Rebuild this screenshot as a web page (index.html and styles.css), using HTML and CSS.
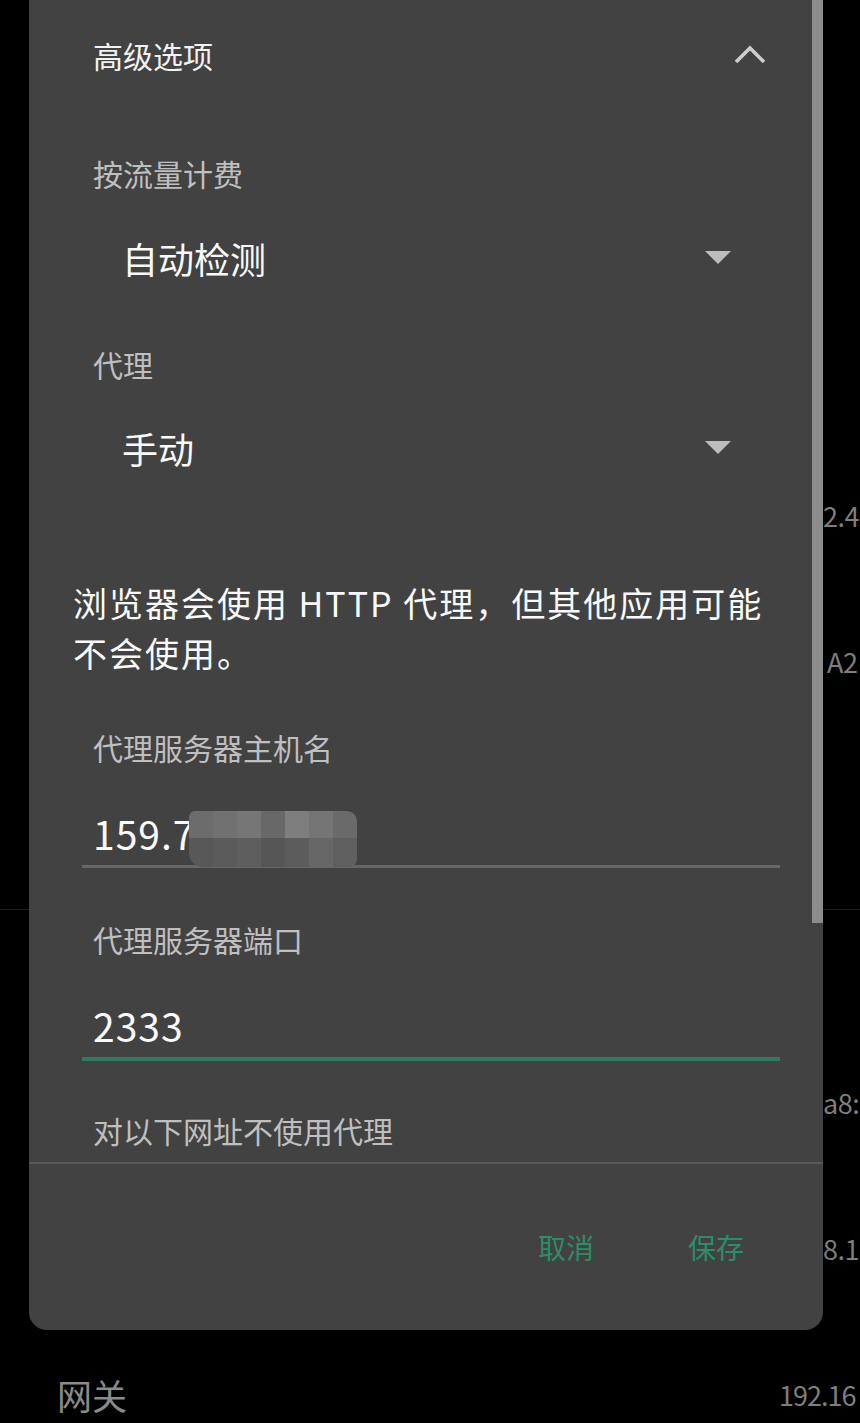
FILE: index.html
```html
<!DOCTYPE html>
<html lang="zh-CN">
<head>
<meta charset="utf-8">
<title>高级选项</title>
<link rel="stylesheet" href="styles.css">
</head>
<body>
<div class="page">
  <div class="bg-list">
    <div class="bg-row"><span class="bg-val edge">2.4</span></div>
    <div class="bg-row"><span class="bg-val edge a2">A2</span></div>
    <div class="bg-row"></div>
    <div class="bg-divider"></div>
    <div class="bg-row first"><span class="bg-val edge">a8:</span></div>
    <div class="bg-row"><span class="bg-val edge">8.1</span></div>
    <div class="bg-row"><span class="bg-label">网关</span><span class="bg-val gw">192.16</span></div>
  </div>

  <div class="dialog">
    <div class="scroll">
      <div class="head">
        <span class="title">高级选项</span>
        <svg class="chev" width="32" height="20" viewBox="0 0 32 20"><polyline points="2,18 16,4 30,18" fill="none" stroke="#cdcdcd" stroke-width="3.6"/></svg>
      </div>

      <div class="label l1">按流量计费</div>
      <div class="spinner s1">
        <span>自动检测</span>
        <svg width="26" height="14" viewBox="0 0 26 14"><polygon points="0,0 26,0 13,13" fill="#bdbdbd"/></svg>
      </div>

      <div class="label l2">代理</div>
      <div class="spinner s2">
        <span>手动</span>
        <svg width="26" height="14" viewBox="0 0 26 14"><polygon points="0,0 26,0 13,13" fill="#bdbdbd"/></svg>
      </div>

      <p class="note">浏览器会使用 HTTP 代理，但其他应用可能不会使用。</p>

      <div class="label l3">代理服务器主机名</div>
      <div class="field f1">
        <span class="val">159.7</span>
        <div class="mosaic">
          <i class="c1"></i><i class="c2"></i><i class="c3"></i><i class="c4"></i><i class="c5"></i><i class="c6"></i><i class="c7"></i>
          <i class="d1"></i><i class="d2"></i><i class="d3"></i><i class="d4"></i><i class="d5"></i><i class="d6"></i><i class="d7"></i>
        </div>
      </div>

      <div class="label l4">代理服务器端口</div>
      <div class="field f2 active">
        <span class="val">2333</span>
      </div>

      <div class="label l5">对以下网址不使用代理</div>
    </div>
    <div class="footer">
      <span class="btn">取消</span>
      <span class="btn">保存</span>
    </div>
    <div class="scrollbar"></div>
  </div>
</div>
</body>
</html>
```

FILE: styles.css
```css
html, body {
  margin: 0;
  padding: 0;
  background: #000;
}

body {
  font-family: "Noto Sans CJK SC", "Noto Sans", "Liberation Sans", sans-serif;
  width: 860px;
  height: 1423px;
  overflow: hidden;
}

.page {
  position: relative;
  width: 860px;
  height: 1423px;
  overflow: hidden;
  background: #000;
}

/* background settings list */
.bg-list {
  display: flex;
  flex-direction: column;
  padding-top: 442px;
}

.bg-row {
  height: 146px;
  display: flex;
  align-items: center;
  flex-shrink: 0;
}

.bg-row.first {
  margin-top: 120px;
}

.bg-row + .bg-row.first,
.bg-divider + .bg-row {
  height: 145px;
}

.bg-divider {
  margin-top: 29px;
  height: 1px;
  background: #1e1e1e;
  flex-shrink: 0;
}

.bg-label {
  padding-left: 57px;
  font-size: 35px;
  color: #8a8a8a;
  width: 779px;
  box-sizing: border-box;
  flex-shrink: 0;
}

.bg-val {
  font-size: 27px;
  color: #7e7e7e;
  white-space: nowrap;
  letter-spacing: -0.5px;
}

.bg-val.edge {
  margin-left: 823px;
}

.bg-val.a2 {
  margin-left: 827px;
}

.bg-val.gw {
  font-size: 27px;
  letter-spacing: -1px;
}

/* dialog */
.dialog {
  position: absolute;
  left: 29px;
  top: 0;
  width: 794px;
  height: 1330px;
  background: #424242;
  border-radius: 0 0 18px 18px;
  display: flex;
  flex-direction: column;
  overflow: hidden;
}

.scroll {
  height: 1162px;
  flex-shrink: 0;
  overflow: hidden;
  border-bottom: 2px solid #595959;
}

.head {
  height: 110px;
  display: flex;
  align-items: center;
  justify-content: space-between;
  padding: 0 57px 0 64px;
}

.title {
  font-size: 30px;
  color: #f2f2f2;
}

.chev {
  display: block;
  margin-top: -2px;
}

.label {
  height: 40px;
  line-height: 40px;
  padding-left: 64px;
  font-size: 30px;
  color: #bfbfbf;
  white-space: nowrap;
}

.l1 { margin-top: 43px; }
.l2 { margin-top: 56px; }
.l3 { margin-top: 49px; }
.l4 { margin-top: 51px; }
.l5 { margin-top: 49px; }

.spinner {
  height: 60px;
  display: flex;
  align-items: center;
  justify-content: space-between;
  padding: 0 92px 0 93px;
  font-size: 36px;
  color: #fafafa;
}

.spinner svg {
  display: block;
}

.s1 { margin-top: 35px; }
.s2 { margin-top: 34px; }

.note {
  margin: 100px 0 0 0;
  padding: 0 36px 0 44px;
  font-size: 34px;
  line-height: 50px;
  letter-spacing: 2px;
  color: #fafafa;
}

.field {
  position: relative;
  height: 65px;
  margin: 33px 43px 0 53px;
  padding-left: 11px;
  display: flex;
  align-items: center;
  border-bottom: 3px solid #666666;
}

.field.active {
  margin-top: 33px;
  border-bottom: 4px solid #2e7b62;
}

.val {
  font-size: 39px;
  color: #fafafa;
  letter-spacing: 1px;
}

.mosaic {
  position: absolute;
  left: 107px;
  top: 11px;
  width: 168px;
  height: 56px;
  display: grid;
  grid-template-columns: repeat(7, 1fr);
  grid-template-rows: 27px 29px;
  border-radius: 6px 10px 8px 14px;
  overflow: hidden;
}

.mosaic i { display: block; }
.c1 { background: #6c6c6c; }
.c2 { background: #717171; }
.c3 { background: #767676; }
.c4 { background: #686868; }
.c5 { background: #7e7e7e; }
.c6 { background: #757575; }
.c7 { background: #6a6a6a; }
.d1 { background: #585858; }
.d2 { background: #5b5b5b; }
.d3 { background: #5e5e5e; }
.d4 { background: #565656; }
.d5 { background: #5c5c5c; }
.d6 { background: #676767; }
.d7 { background: #5f5f5f; }

.footer {
  flex: 1;
  display: flex;
  align-items: center;
  justify-content: flex-end;
  gap: 94px;
  padding-right: 79px;
}

.btn {
  font-size: 28px;
  color: #2c8d68;
}

.scrollbar {
  position: absolute;
  right: 0;
  top: 0;
  width: 11px;
  height: 923px;
  background: #8c8c8c;
}
```
